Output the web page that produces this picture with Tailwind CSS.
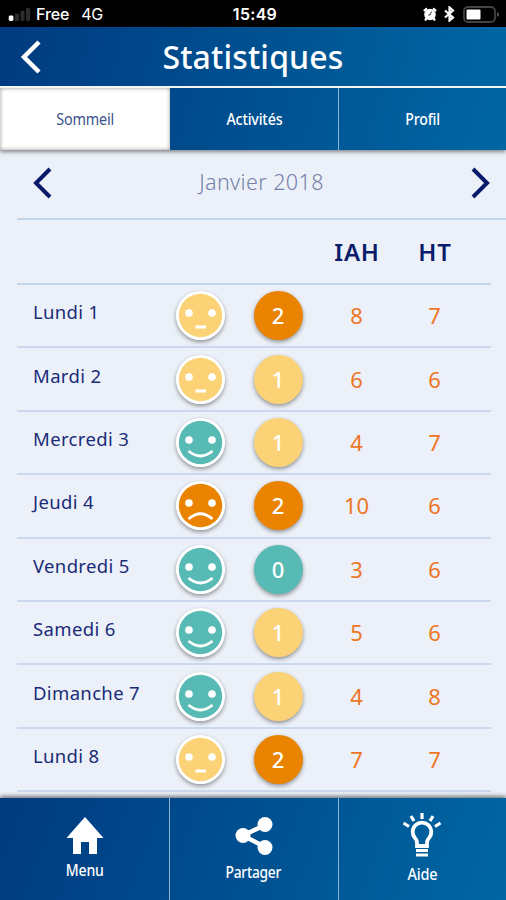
<!DOCTYPE html>
<html lang="fr">
  <head>
    <meta charset="UTF-8" />
    <meta name="viewport" content="width=device-width, initial-scale=1.0" />
    <script src="https://cdn.jsdelivr.net/npm/@tailwindcss/browser@4"></script>
    <title>Statistiques</title>
  </head>
  <body class="bg-[#ecf1f9]">
    <div class="relative flex h-[900px] w-[506px] flex-col overflow-hidden bg-[#ecf1f9] font-['Noto_Sans',sans-serif] text-[#0b1c6b]">
      <!-- Status bar -->
      <div class="grid h-[27px] shrink-0 grid-cols-3 items-center bg-black px-[7px] pt-px font-['Inter',sans-serif] text-[16px] leading-none text-white">
        <div class="flex items-center">
          <svg class="mr-[5px] h-[14px] w-[24px]" viewBox="0 0 24 15">
            <rect x="1" y="9" width="5" height="6" rx="1.5" fill="#fff" />
            <rect x="7.5" y="7" width="4.5" height="8" rx="1" fill="#2b2b2b" />
            <rect x="13.5" y="4" width="4.5" height="11" rx="1" fill="#2b2b2b" />
            <rect x="19.5" y="1" width="4.5" height="14" rx="1" fill="#2b2b2b" />
          </svg>
          <span class="font-medium tracking-[-0.1px]">Free</span>
          <span class="ml-[12px] tracking-[-0.3px]">4G</span>
        </div>
        <div class="-ml-[14px] pl-[18px] text-center font-semibold tracking-[0.3px]">15:49</div>
        <div class="flex items-center justify-end">
          <svg class="mr-[7px] h-[14px] w-[14px]" viewBox="0 0 14 14">
            <circle cx="7" cy="7.5" r="5.8" fill="#fff" />
            <path d="M.8 4 4 1.3M13.2 4 10 1.3M3.5 11.5 2 13.5M10.5 11.500 12 13.5" stroke="#fff" stroke-width="2.2" />
            <path d="M8.5 4.5 7 8H5.2" fill="none" stroke="#000" stroke-width="0.8" />
          </svg>
          <svg class="mr-[8px] h-[16px] w-[11px]" viewBox="0 0 11 16">
            <path d="M1 4.5 9 11.5 5.5 14.5V1.5L9 4.5 1 11.5" fill="none" stroke="#fff" stroke-width="2.2" />
          </svg>
          <svg class="h-[17px] w-[36px]" viewBox="0 0 36 17">
            <rect x="1" y="1" width="31" height="15" rx="4" fill="none" stroke="#444" stroke-width="1.8" />
            <rect x="3.5" y="3.5" width="14" height="10" rx="1" fill="#fff" />
            <path d="M34 6v5q2-1 2-2.5T34 6" fill="#555" />
          </svg>
        </div>
      </div>

      <!-- Title bar -->
      <header class="flex h-[61px] shrink-0 items-center border-b-2 border-white bg-linear-[105deg,#003a7f,#0067a3]">
        <svg class="ml-[20px] h-[34px] w-[22px]" viewBox="0 0 22 34">
          <path d="M19 2 4 17 19 32" fill="none" stroke="#fff" stroke-width="4.5" />
        </svg>
        <h1 class="mr-[42px] flex-1 text-center text-[32px] leading-none font-medium tracking-[0.15px] text-white">Statistiques</h1>
      </header>

      <!-- Tabs -->
      <div class="z-10 grid h-[62px] shrink-0 grid-cols-[170px_168px_168px] bg-linear-[105deg,#003a7f,#0067a3] text-[16px] text-white shadow-[0_2px_4px_rgba(0,0,0,0.45)]">
        <div class="flex items-center justify-center bg-white pb-px text-[#3d538c] shadow-[inset_0_0_4px_rgba(0,0,0,0.4)]"><span class="scale-x-[0.9] tracking-[-0.2px]">Sommeil</span></div>
        <div class="flex items-center justify-center pb-px font-medium"><span class="scale-x-[0.89] tracking-[-0.2px]">Activités</span></div>
        <div class="flex items-center justify-center border-l border-[#8fb4d3] pb-px font-medium"><span class="scale-x-[0.88] tracking-[-0.2px]">Profil</span></div>
      </div>

      <!-- Month picker -->
      <div class="ml-[17px] flex h-[70px] shrink-0 items-center justify-between border-b-2 border-[#c3d5ea] pr-[16px] pb-[3px] pl-[16px]">
        <svg class="h-[32px] w-[20px]" viewBox="0 0 20 32">
          <path d="M17 2 3 16 17 30" fill="none" stroke="#06196a" stroke-width="4" />
        </svg>
        <span class="text-[21.5px] font-light tracking-[0.4px] text-[#7480a9]">Janvier 2018</span>
        <svg class="h-[32px] w-[20px]" viewBox="0 0 20 32">
          <path d="M3 2 17 16 3 30" fill="none" stroke="#06196a" stroke-width="4" />
        </svg>
      </div>

      <!-- Column titles -->
      <div class="mr-[15px] ml-[17px] grid h-[65px] shrink-0 grid-cols-[144px_78px_78px_78px_78px] items-center border-b-2 border-[#c3d5ea] text-center text-[24px] font-semibold tracking-[0.8px]">
        <span class="col-start-4 pl-[2px]">IAH</span>
        <span class="pl-[2px]">HT</span>
      </div>

      <div id="days" class="mr-[15px] ml-[17px]"></div>

      <!-- Bottom navigation -->
      <nav class="absolute inset-x-0 bottom-0 grid h-[102px] grid-cols-[169px_169px_168px] bg-linear-[110deg,#003a7f,#0067a3] text-[17px] leading-[20px] font-medium tracking-[-0.3px] text-white shadow-[0_-2px_4px_rgba(0,0,0,0.5)]">
        <div class="flex flex-col items-center pt-[19px]">
          <svg class="h-[37px] w-[38px]" viewBox="0 0 38 37">
            <path d="M19 0 37.5 21H31V37H23V25H15V37H7V21H.5Z" fill="#fff" />
          </svg>
          <span class="mt-[6px] scale-x-[0.83]">Menu</span>
        </div>
        <div class="flex flex-col items-center border-l border-[#8fb4d3] pt-[19px] pr-px">
          <svg class="h-[38px] w-[38px]" viewBox="0 0 38 38">
            <path d="M30 8 8 18.5 30 30" fill="none" stroke="#fff" stroke-width="4.5" />
            <circle cx="30" cy="7.5" r="7.5" fill="#fff" />
            <circle cx="8" cy="18.5" r="7.5" fill="#fff" />
            <circle cx="30" cy="30.5" r="7.5" fill="#fff" />
          </svg>
          <span class="mt-[7px] scale-x-[0.81]">Partager</span>
        </div>
        <div class="flex flex-col items-center border-l border-[#8fb4d3] pt-[15px] pr-px">
          <svg class="h-[44px] w-[38px]" viewBox="0 0 38 44" fill="none" stroke="#fff">
            <path d="M14 33V30Q14 27 12 25A9.3 9.3 0 1 1 26 25Q24 27 24 30V33Z" stroke-width="3.8" />
            <path d="M13 37.5H25M13 42H25" stroke-width="2.8" />
            <path d="M19 0V6M8 3 11 8M30 3 27 8M.5 10 6 13.5M37.5 10 32 13.5" stroke-width="3.2" />
          </svg>
          <span class="mt-[7px] scale-x-[0.85]">Aide</span>
        </div>
      </nav>
    </div>

    <script>
      const days = [
        { label: 'Lundi 1', mood: 'neutral', score: 2, iah: 8, ht: 7 },
        { label: 'Mardi 2', mood: 'neutral', score: 1, iah: 6, ht: 6 },
        { label: 'Mercredi 3', mood: 'happy', score: 1, iah: 4, ht: 7 },
        { label: 'Jeudi 4', mood: 'sad', score: 2, iah: 10, ht: 6 },
        { label: 'Vendredi 5', mood: 'happy', score: 0, iah: 3, ht: 6 },
        { label: 'Samedi 6', mood: 'happy', score: 1, iah: 5, ht: 6 },
        { label: 'Dimanche 7', mood: 'happy', score: 1, iah: 4, ht: 8 },
        { label: 'Lundi 8', mood: 'neutral', score: 2, iah: 7, ht: 7 },
      ];

      const moods = {
        happy: { color: '#58bab4', mouth: 'M12.5 33Q24.5 43 36.5 33' },
        neutral: { color: '#fbd376', mouth: 'M19.5 36H30' },
        sad: { color: '#e98300', mouth: 'M12.5 38Q24.5 27.5 36.5 38' },
      };

      const scoreColors = ['bg-[#58bab4]', 'bg-[#fbd376]', 'bg-[#e98300]'];

      // One table row per day
      document.getElementById('days').innerHTML = days
        .map(
          (day) => `
          <div class="grid h-[63.4px] grid-cols-[144px_78px_78px_78px_78px] items-center justify-items-center border-b-2 border-[#cad9ed] text-[22px] text-[#ee7625]">
            <span class="justify-self-start pb-[7px] pl-[16px] text-[18.5px] tracking-[0.35px] whitespace-nowrap text-[#1a2b78]">${day.label}</span>
            <svg class="h-[49px] w-[49px] rounded-full shadow-[0_2px_4px_rgba(0,0,0,0.4)]" viewBox="0 0 49 49">
              <circle cx="24.5" cy="24.5" r="24.5" fill="#fff" />
              <circle cx="24.5" cy="24.5" r="21.7" fill="${moods[day.mood].color}" />
              <circle cx="13" cy="22" r="3.8" fill="#fff" />
              <circle cx="36" cy="22" r="3.8" fill="#fff" />
              <path d="${moods[day.mood].mouth}" fill="none" stroke="#fff" stroke-width="2.8" />
            </svg>
            <span class="flex h-[49px] w-[49px] items-center justify-center rounded-full font-medium text-white shadow-[0_2px_4px_rgba(0,0,0,0.4)] ${scoreColors[day.score]}">${day.score}</span>
            <span class="pl-px">${day.iah}</span>
            <span class="pl-px">${day.ht}</span>
          </div>`
        )
        .join('');
    </script>
  </body>
</html>
